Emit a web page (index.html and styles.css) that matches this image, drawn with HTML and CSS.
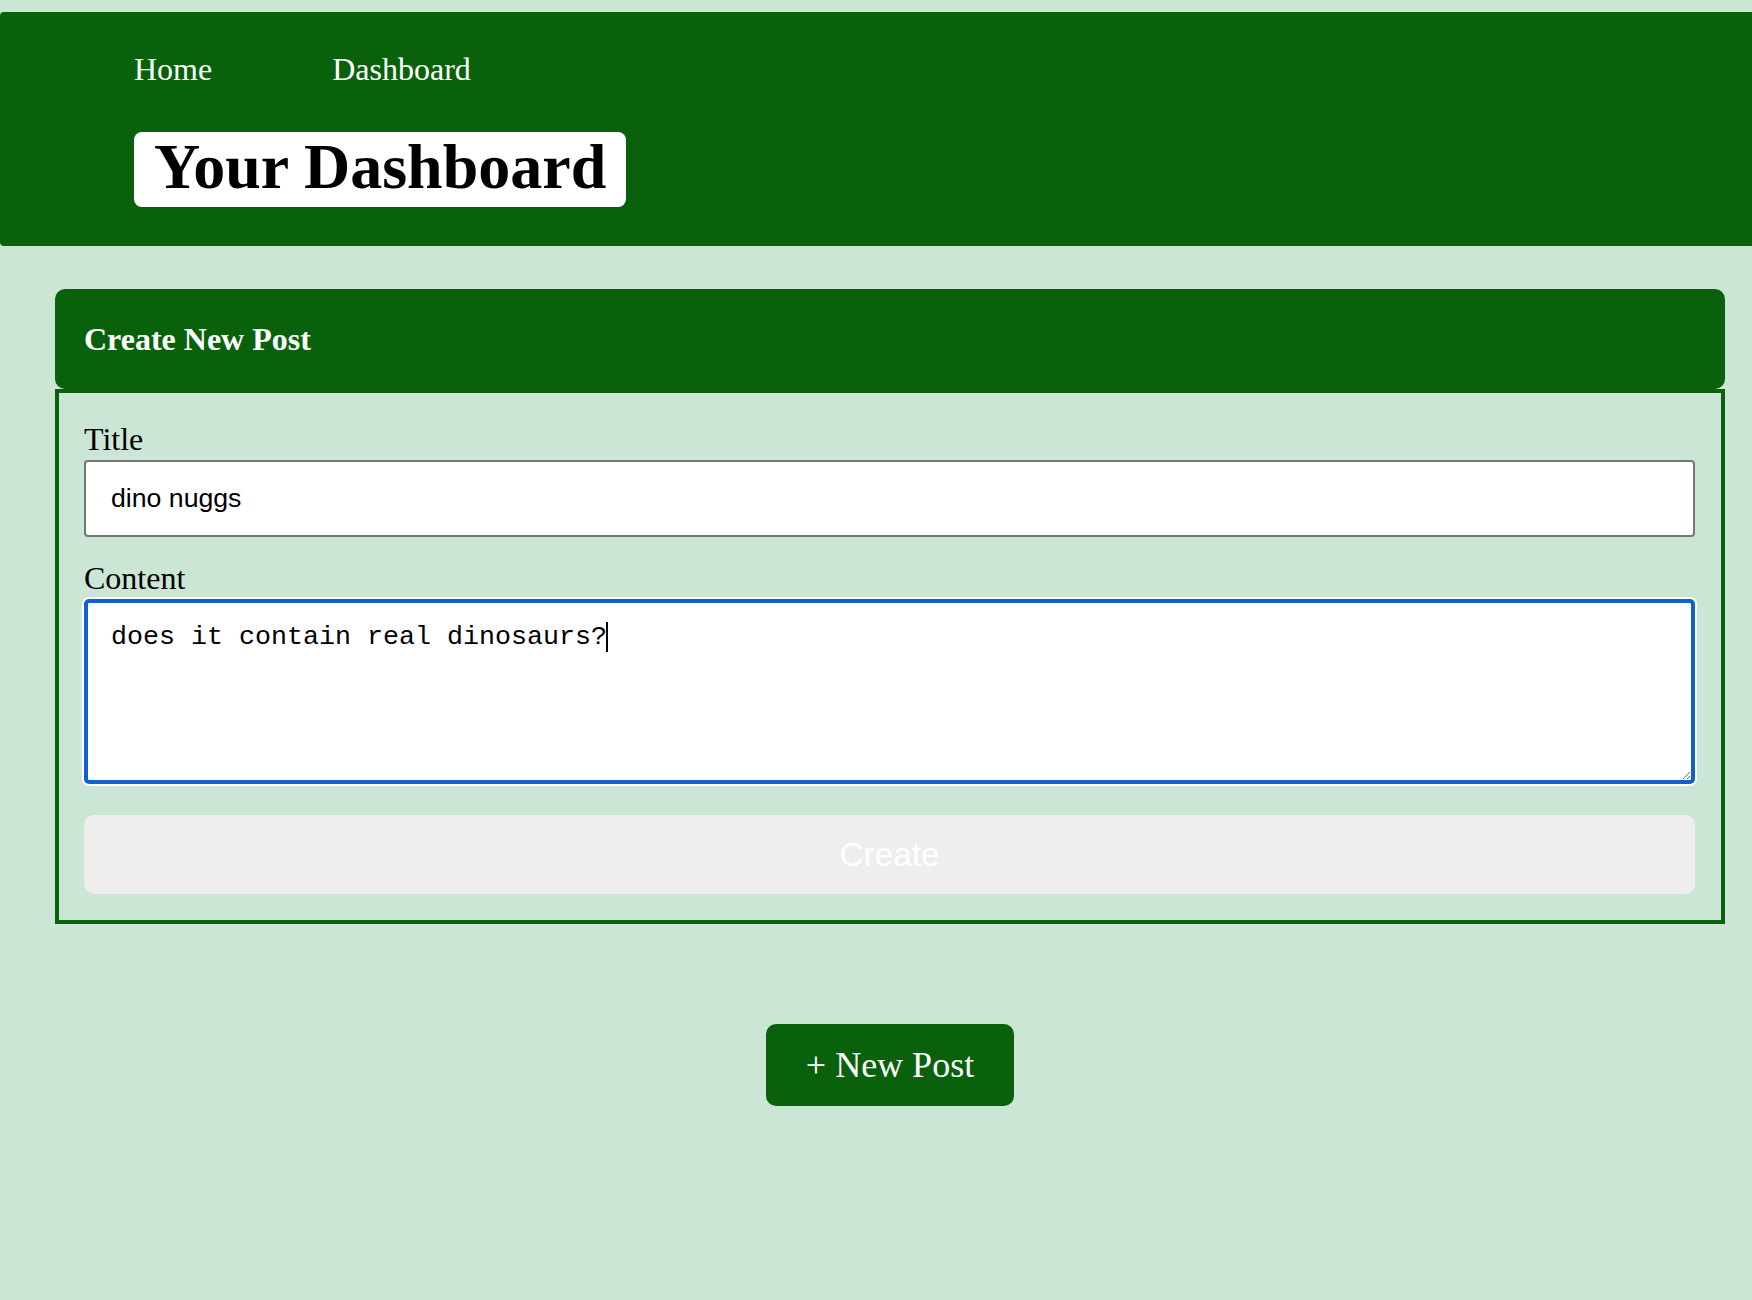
FILE: index.html
```html
<!DOCTYPE html>
<html lang="en">
<head>
<meta charset="utf-8">
<title>Your Dashboard</title>
<link rel="stylesheet" href="styles.css">
</head>
<body>
<header class="site-header">
  <nav class="nav">
    <a class="nav-link" href="#">Home</a>
    <a class="nav-link" href="#">Dashboard</a>
  </nav>
  <h1 class="page-title">Your Dashboard</h1>
</header>

<main class="content">
  <section class="card">
    <div class="card-header">Create New Post</div>
    <form class="card-body">
      <div class="field">
        <label class="field-label" for="title">Title</label>
        <input class="text-input" id="title" type="text" value="dino nuggs">
      </div>
      <div class="field field-last">
        <label class="field-label" for="content">Content</label>
        <div class="area-wrap">
          <textarea class="text-area is-focused" id="content">does it contain real dinosaurs?</textarea>
          <span class="caret"></span>
        </div>
      </div>
      <button class="create-btn" type="button">Create</button>
    </form>
  </section>

  <div class="new-post-row">
    <button class="new-post-btn" type="button">+ New Post</button>
  </div>
</main>
</body>
</html>
```

FILE: styles.css
```css
html, body {
  margin: 0;
  padding: 0;
}

body {
  background: #cce6d6;
  font-family: "Liberation Serif", "Times New Roman", serif;
  color: #000;
  min-height: 1300px;
}

.site-header {
  margin-top: 12px;
  background: #0a610c;
  border-radius: 4px 0 0 4px;
  padding: 39px 0 39px 134px;
}

.nav {
  display: flex;
  gap: 120px;
  font-size: 32px;
  line-height: normal;
}

.nav-link {
  color: #fff;
  text-decoration: none;
}

.page-title {
  display: inline-block;
  margin: 44px 0 0 0;
  padding: 0 20px 6px 20px;
  background: #fff;
  border-radius: 8px;
  font-size: 64px;
  line-height: 69px;
  font-weight: bold;
}

.content {
  margin: 43px 27px 0 55px;
}

.card-header {
  height: 100px;
  box-sizing: border-box;
  display: flex;
  align-items: center;
  padding-left: 29px;
  background: #0a610c;
  color: #fff;
  border-radius: 10px;
  font-size: 32px;
  font-weight: bold;
}

.card-body {
  display: block;
  margin: 0;
  border: 4px solid #0a610c;
  padding: 28px 26px 26px 25px;
}

.field {
  margin-bottom: 23px;
}

.field-last {
  margin-bottom: 31px;
}

.field-label {
  display: block;
  font-size: 32px;
  line-height: normal;
  margin-bottom: 2px;
}

.text-input {
  display: block;
  width: 100%;
  height: 77px;
  box-sizing: border-box;
  margin: 0;
  padding: 0 25px;
  border: 2px solid #767676;
  border-radius: 4px;
  background: #fff;
  color: #000;
  font-family: "Liberation Sans", Arial, sans-serif;
  font-size: 26.67px;
}

.area-wrap {
  position: relative;
}

.text-area {
  display: block;
  width: 100%;
  height: 185px;
  box-sizing: border-box;
  margin: 0;
  padding: 19px 23px;
  border: 2px solid #767676;
  border-radius: 5px;
  background: #fff;
  color: #000;
  font-family: "Liberation Mono", "Courier New", monospace;
  font-size: 26.67px;
  line-height: normal;
  resize: both;
}

.text-area.is-focused {
  border: 4px solid #1160d2;
  outline: none;
  box-shadow: 0 0 0 2px #fff;
}

.caret {
  position: absolute;
  left: 522px;
  top: 23px;
  width: 2px;
  height: 30px;
  background: #000;
}

.create-btn {
  display: block;
  width: 100%;
  height: 79px;
  margin: 0;
  border: none;
  border-radius: 10px;
  background: #eeeeee;
  color: #fff;
  font-family: "Liberation Sans", Arial, sans-serif;
  font-size: 33.3px;
}

.new-post-row {
  display: flex;
  justify-content: center;
  margin-top: 100px;
}

.new-post-btn {
  padding: 20px 40px;
  border: none;
  border-radius: 10px;
  background: #0a610c;
  color: #fff;
  font-family: "Liberation Serif", "Times New Roman", serif;
  font-size: 36px;
  line-height: normal;
}
```
